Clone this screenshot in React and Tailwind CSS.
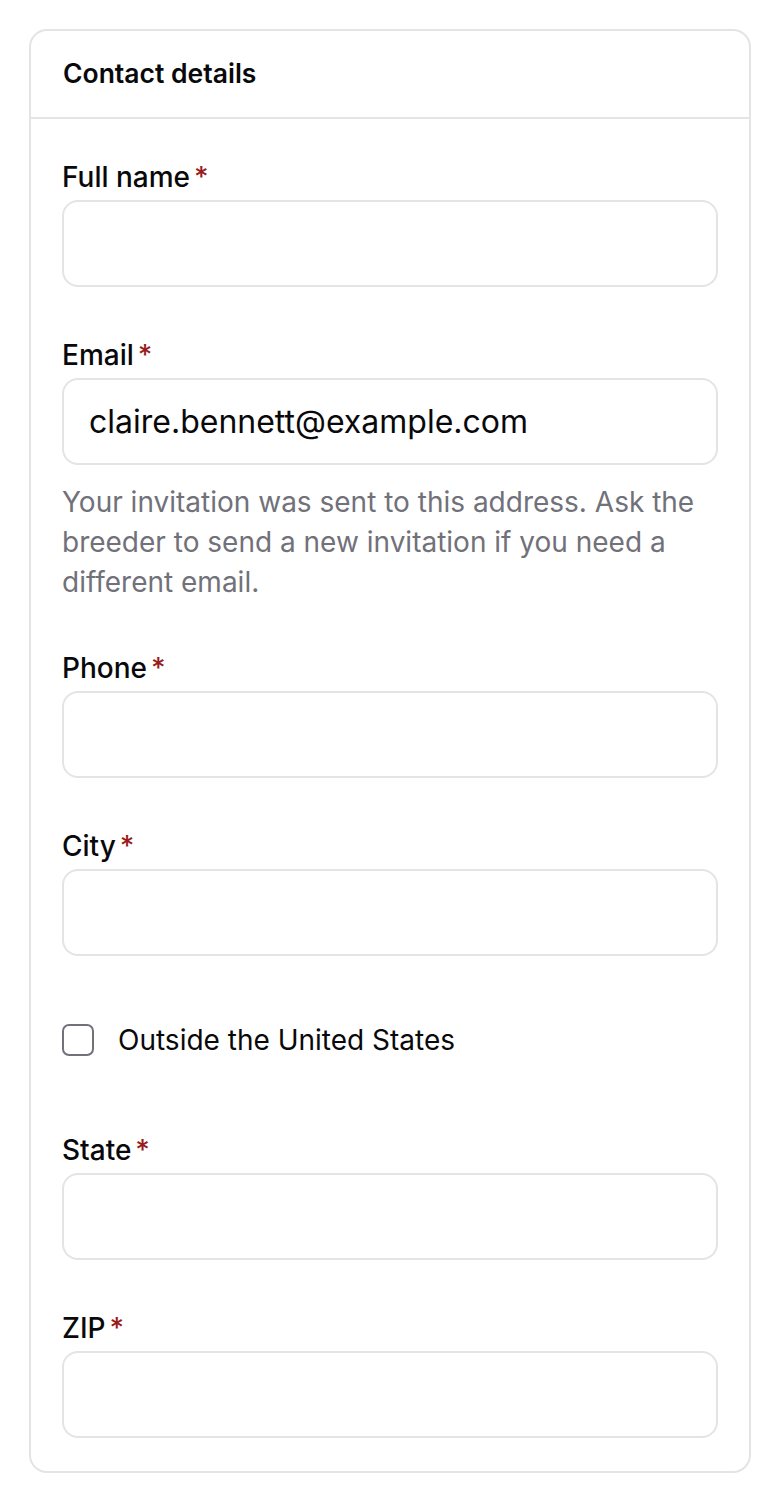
import React from "react";

// Contact details form card, drawn at 2x scale
const Field = ({ label, value = "", help }) => (
  <div className="flex flex-col">
    <label className="flex items-center h-[40px] text-[28px] leading-[40px] font-medium text-[#09090b]">
      {label}
      <span className="ml-[4px] text-[#991b1b]">*</span>
    </label>
    <input
      type="text"
      defaultValue={value}
      className="mt-[3px] h-[87px] w-full rounded-[16px] border-2 border-[#e4e4e7] bg-white px-[25px] text-[32px] text-[#09090b] outline-none"
    />
    {help && (
      <p className="mt-[17px] -mb-[2px] text-[28px] leading-[40px] text-[#71717a]">
        {help}
      </p>
    )}
  </div>
);

export default function App() {
  return (
    <div
      className="min-h-screen bg-white px-[29px] pt-[29px] pb-[29px]"
      style={{ fontFamily: "Inter, 'Noto Sans', sans-serif" }}
    >
      <div className="rounded-[18px] border-2 border-[#e4e4e7] bg-white">
        {/* Header */}
        <div className="flex h-[88px] items-center border-b-2 border-[#e4e4e7] px-[32px]">
          <h2 className="text-[26.5px] font-semibold text-[#09090b]">
            Contact details
          </h2>
        </div>

        {/* Body */}
        <div className="flex flex-col gap-[48px] px-[31px] pt-[38px] pb-[33px]">
          <Field label="Full name" />
          <Field
            label="Email"
            value="claire.bennett@example.com"
            help="Your invitation was sent to this address. Ask the breeder to send a new invitation if you need a different email."
          />
          <Field label="Phone" />
          <Field label="City" />

          <div className="flex items-center gap-[24px] pt-[16px] pb-[22px]">
            <span className="h-[32px] w-[32px] shrink-0 rounded-[7px] border-2 border-[#71717a] bg-white" />
            <span className="text-[28px] leading-[40px] text-[#09090b]">
              Outside the United States
            </span>
          </div>

          <Field label="State" />
          <Field label="ZIP" />
        </div>
      </div>
    </div>
  );
}
